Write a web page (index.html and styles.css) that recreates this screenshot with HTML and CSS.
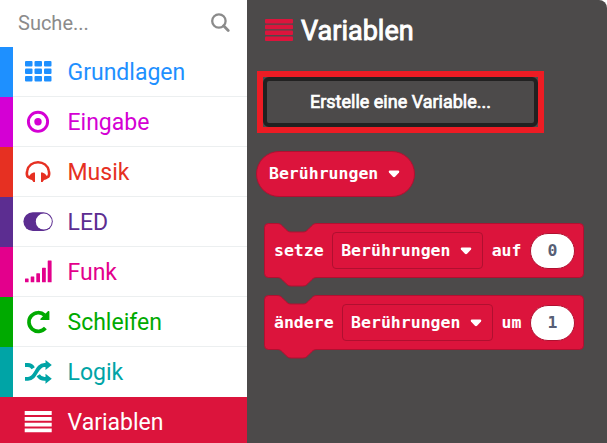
FILE: index.html
```html
<!DOCTYPE html>
<html lang="de">
<head>
<meta charset="utf-8">
<title>Variablen</title>
<link rel="stylesheet" href="styles.css">
</head>
<body>
<div class="app">
  <nav class="toolbox">
    <div class="search">
      <span class="search-text">Suche...</span>
      <svg class="search-icon" width="20" height="20" viewBox="0 0 20 20"><circle cx="8.9" cy="8" r="6.7" fill="none" stroke="currentColor" stroke-width="2.3"/><path d="M13.6 12.8l4.6 4.6" stroke="currentColor" stroke-width="2.8" stroke-linecap="round"/></svg>
    </div>
    <div class="row basic"><svg class="icon" viewBox="0 0 32 26"><g fill="currentColor"><rect x="3" y="3" width="7.5" height="5.6" rx="1"/><rect x="12.5" y="3" width="7.5" height="5.6" rx="1"/><rect x="22" y="3" width="7.5" height="5.6" rx="1"/><rect x="3" y="10.5" width="7.5" height="5.6" rx="1"/><rect x="12.5" y="10.5" width="7.5" height="5.6" rx="1"/><rect x="22" y="10.5" width="7.5" height="5.6" rx="1"/><rect x="3" y="18" width="7.5" height="5.6" rx="1"/><rect x="12.5" y="18" width="7.5" height="5.6" rx="1"/><rect x="22" y="18" width="7.5" height="5.6" rx="1"/></g></svg><span class="label">Grundlagen</span></div>
    <div class="row input"><svg class="icon" viewBox="0 0 32 26"><circle cx="16" cy="13.8" r="9.6" fill="none" stroke="currentColor" stroke-width="2.9"/><circle cx="16" cy="13.8" r="3.7" fill="currentColor"/></svg><span class="label">Eingabe</span></div>
    <div class="row music"><svg class="icon" viewBox="0 0 32 26"><path d="M6.2 19.5C4.6 17.5 4.7 14.5 5.2 12.8C6.3 7.5 10.8 4.3 16 4.3S25.7 7.500 26.8 12.8C27.3 14.5 27.4 17.5 25.8 19.5" fill="none" stroke="currentColor" stroke-width="2.5"/><path d="M13 14.6V24h-1.600L10 22Q6 21.600 4.700 18.6Q8 18 9 15.7L11.500 14.6zM19 14.6V24h1.600L22 22Q26 21.600 27.300 18.6Q24 18 23 15.7L20.500 14.6z" fill="currentColor"/></svg><span class="label">Musik</span></div>
    <div class="row led"><svg class="icon" viewBox="0 0 32 26"><rect x="1.4" y="4.2" width="29.4" height="18.8" rx="9.4" fill="currentColor"/><circle cx="21.8" cy="13.6" r="8" fill="#fff"/></svg><span class="label">LED</span></div>
    <div class="row radio"><svg class="icon" viewBox="0 0 32 26"><g fill="currentColor"><rect x="3" y="20.5" width="3.6" height="3.8" rx=".5"/><rect x="8.7" y="18.5" width="3.6" height="5.8" rx=".5"/><rect x="14.3" y="15.2" width="3.7" height="9.1" rx=".5"/><rect x="20" y="9.7" width="3.8" height="14.6" rx=".5"/><rect x="25.7" y="2.4" width="3.9" height="21.9" rx=".5"/></g></svg><span class="label">Funk</span></div>
    <div class="row loops"><svg class="icon" viewBox="0 0 32 26"><path d="M23.4 20A9.3 9.3 0 1 1 22.6 7.2" fill="none" stroke="currentColor" stroke-width="3.7"/><path d="M27.4 3.4V12h-8.7q-.7-.5-.2-1.2l7.6-7.7q.8-.4 1.3.3z" fill="currentColor"/></svg><span class="label">Schleifen</span></div>
    <div class="row logic"><svg class="icon" viewBox="0 0 32 26"><g fill="none" stroke="currentColor" stroke-width="3.8"><path d="M3 20.8H6C14.5 20.8 14 7 22.5 7H25"/><path d="M3 7H6C8.5 7 10 8.2 11.2 10.2M16.2 17.2C17.8 19.8 19.5 20.8 22.5 20.8H25"/></g><path d="M23.5 2V12L29.8 7zM23.5 15.8V25.8L29.8 20.8z" fill="currentColor"/></svg><span class="label">Logik</span></div>
    <div class="row variables"><svg class="icon" viewBox="0 0 32 26"><path d="M2.700 3.1h27v3.9h-27zM2.700 8.900h27v3.900h-27zM2.700 14.700h27v3.900h-27zM2.700 20.400h27v3.900h-27z" fill="currentColor"/></svg><span class="label">Variablen</span></div>
  </nav>
  <main class="flyout">
    <h1 class="heading">
      <svg width="28" height="22" viewBox="0 0 28 22"><g fill="#dc143c"><rect width="28" height="4.500" rx="1"/><rect y="5.8" width="28" height="4.500" rx="1"/><rect y="11.6" width="28" height="4.500" rx="1"/><rect y="17.4" width="28" height="4.500" rx="1"/></g></svg>
      <span class="heading-text">Variablen</span>
    </h1>
    <div class="highlight"><button class="create"><span class="create-text">Erstelle eine Variable...</span></button></div>
    <div class="reporter"><span>Berührungen</span><svg class="caret" viewBox="0 0 12 8"><path d="M1.5.5h9q1.4.5.5 1.9L7.3 6.6Q6 7.7 4.7 6.6L1 2.4Q.1 1 1.5.5z"/></svg></div>
    <div class="block">
      <svg class="shape" viewBox="0 0 322 66"><path d="M1.5 5.500q0-4 4-4H14c3 0 4 1 5.500 2.500l3.500 3.500c1.500 1.500 2.500 2.500 5 2.500H40c2.500 0 3.500-1 5-2.500L48.500 4c1.500-1.500 2.500-2.500 5.500-2.500H316.500q4 0 4 4V51.500q0 4-4 4H54c-3 0-4 1-5.500 2.500L45 61.500c-1.500 1.500-2.500 2.500-5 2.500H28c-2.500 0-3.500-1-5-2.500L19.500 58c-1.500-1.500-2.500-2.500-5.500-2.500H5.500q-4 0-4-4z"/></svg>
      <span>setze</span>
      <span class="field"><span>Berührungen</span><svg class="caret" viewBox="0 0 12 8"><path d="M1.5.5h9q1.4.5.5 1.9L7.3 6.6Q6 7.7 4.7 6.6L1 2.4Q.1 1 1.5.5z"/></svg></span>
      <span>auf</span><span class="value">0</span>
    </div>
    <div class="block">
      <svg class="shape" viewBox="0 0 322 66"><path d="M1.5 5.500q0-4 4-4H14c3 0 4 1 5.500 2.500l3.500 3.500c1.500 1.500 2.500 2.500 5 2.500H40c2.500 0 3.500-1 5-2.500L48.500 4c1.500-1.500 2.500-2.500 5.500-2.500H316.500q4 0 4 4V51.500q0 4-4 4H54c-3 0-4 1-5.500 2.500L45 61.500c-1.500 1.500-2.500 2.500-5 2.500H28c-2.500 0-3.500-1-5-2.500L19.500 58c-1.500-1.500-2.500-2.500-5.500-2.500H5.500q-4 0-4-4z"/></svg>
      <span>ändere</span>
      <span class="field"><span>Berührungen</span><svg class="caret" viewBox="0 0 12 8"><path d="M1.5.5h9q1.4.5.5 1.9L7.3 6.6Q6 7.7 4.7 6.6L1 2.4Q.1 1 1.5.5z"/></svg></span>
      <span>um</span><span class="value">1</span>
    </div>
  </main>
</div>
</body>
</html>
```
FILE: styles.css
```css
* { box-sizing: border-box; }
body { margin: 0; background: #fff; font-family: Roboto, sans-serif; overflow: hidden; }
.app { display: flex; width: 607px; height: 443px; overflow: hidden; }
.toolbox { width: 247px; flex: none; background: #fff; }
.search { height: 47px; padding: 0 17px 2px 18px; display: flex; align-items: center; justify-content: space-between; color: #8b8b8b; font-size: 20px; }
.search-icon { display: block; }
.row { height: 50px; display: flex; align-items: center; padding-left: 9px; border-left: 13px solid currentColor; font-size: 23px; background: linear-gradient(#eceff0, #eceff0) bottom / 100% 1px no-repeat; }
.icon { width: 32px; height: 26px; flex: none; margin: 0 13.5px 2px 0; }
.basic { color: #1e90ff; }
.input { color: #d400d4; }
.music { color: #e63022; }
.led { color: #5c2d91; }
.radio { color: #e3008c; }
.loops { color: #00aa00; }
.logic { color: #00a4a6; background: none; }
.variables { background: #dc143c; color: #fff; border-color: #dc143c; }
.flyout { flex: 1; background: #4c4a4a; border-top-right-radius: 8px; display: flex; flex-direction: column; align-items: flex-start; }
.heading { margin: 15px 0 0 18px; height: 32px; display: flex; align-items: center; gap: 8px; color: #fff; font-size: 27px; font-weight: 400; line-height: 32px; }
.heading-text { -webkit-text-stroke: 0.9px #fff; }
.heading svg { display: block; margin-bottom: 3px; }
.highlight { margin: 24px 0 0 10px; width: 287px; height: 62px; border: 6px solid #ed1c24; }
.create { display: block; width: 275px; height: 50px; padding: 0; border: 4px solid #212121; border-radius: 6px; background: #4c4a4a; color: #fff; font: 400 18px/42px Roboto, sans-serif; }
.create-text { -webkit-text-stroke: 0.7px #fff; }
.reporter, .block { color: #fff; font: bold 16.5px/20px "DejaVu Sans Mono", monospace; }
.reporter { margin: 18px 0 0 9px; width: 159px; height: 46px; padding-left: 12px; border: 1px solid #b01030; border-radius: 23px; background: #dc143c; display: flex; align-items: center; }
.caret { width: 12px; height: 8px; flex: none; margin-left: 10px; fill: #fff; }
.block { position: relative; margin: 25px 0 0 16px; width: 322px; height: 57px; padding: 0 10px 0 11px; display: flex; align-items: center; justify-content: space-between; }
.block + .block { margin-top: 15px; }
.shape { position: absolute; left: 0; top: 0; width: 322px; height: 66px; fill: #dc143c; stroke: #b01030; z-index: 0; }
.block > span { position: relative; }
.field { width: 151px; height: 37px; padding-left: 8px; border: 1px solid #b01030; border-radius: 4px; display: flex; align-items: center; }
.value { width: 45px; height: 36px; border: 1px solid #b01030; border-radius: 18px; background: #fff; color: #575e75; line-height: 34px; text-align: center; }
```
